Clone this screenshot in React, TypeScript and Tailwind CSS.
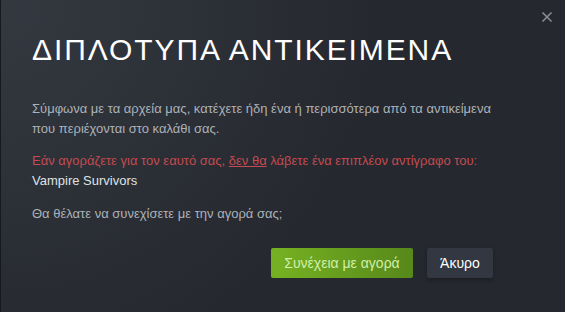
import { X } from 'lucide-react';

export default function App() {
  return (
    <div className="relative h-[312px] w-[565px] overflow-hidden border-l border-[#16191e] bg-[#25282e] bg-[radial-gradient(circle_at_top_left,rgba(74,81,92,0.4)_0%,rgba(75,81,92,0)_60%)] font-['Liberation_Sans',Arial,sans-serif]">
      <button className="absolute right-[10px] top-[9px] text-[#8b8e92]">
        <X size={16} strokeWidth={2.5} />
      </button>

      <div className="w-[500px] pl-[31px] pt-[35px]">
        <h1 className="text-[30px] font-normal uppercase leading-none tracking-[1.9px] text-white">
          ΔΙΠΛΟΤΥΠΑ ΑΝΤΙΚΕΙΜΕΝΑ
        </h1>

        <div className="mt-[34px] text-[13px] leading-[20px] text-[#acb2b8]">
          <p>
            Σύμφωνα με τα αρχεία μας, κατέχετε ήδη ένα ή περισσότερα από τα αντικείμενα
            που περιέχονται στο καλάθι σας.
          </p>
          <p className="mt-[12px] text-[#c44b50]">
            Εάν αγοράζετε για τον εαυτό σας, <span className="underline">δεν θα</span> λάβετε ένα επιπλέον αντίγραφο του:
          </p>
          <p className="text-[#dfe3e6]">Vampire Survivors</p>
          <p className="mt-[13px]">Θα θέλατε να συνεχίσετε με την αγορά σας;</p>
        </div>

        <div className="mt-[24px] flex w-[461px] justify-end gap-[14px]">
          <button className="h-[30px] w-[142px] rounded-[2px] bg-[linear-gradient(to_right,#75b022_5%,#588a1b_95%)] text-[14px] text-[#d2efa9]">
            Συνέχεια με αγορά
          </button>
          <button className="h-[30px] w-[66px] rounded-[2px] bg-[#323742] text-[14px] text-white shadow-[0_2px_4px_rgba(0,0,0,0.3)]">
            Άκυρο
          </button>
        </div>
      </div>
    </div>
  );
}
